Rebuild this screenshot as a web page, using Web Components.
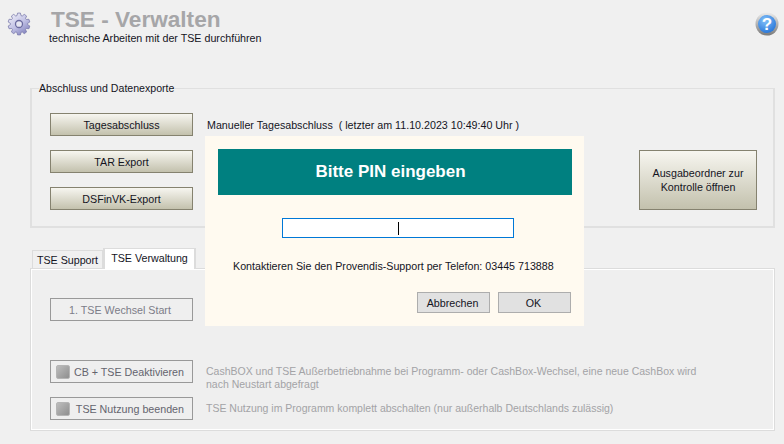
<!DOCTYPE html>
<html lang="de">
<head>
<meta charset="utf-8">
<title>TSE - Verwalten</title>
<style>
  html, body { margin: 0; height: 100%; background: #f0f0f0; }
  body { font: 10.7px "Liberation Sans", Arial, sans-serif; color: #14141e; overflow: hidden; }
</style>
</head>
<body>
<tse-window></tse-window>

<script>
// ten tooth gear outline, centre 12/12
function gearPath(){
  let d = '';
  const teeth = 10;
  for(let i = 0; i < teeth; i++){
    const a = i * Math.PI * 2 / teeth;
    const pts = [[8.6, -.24], [11, -.13], [11, .13], [8.6, .24]];
    pts.forEach((p, n) => {
      const x = 12 + p[0] * Math.sin(a + p[1]);
      const y = 12 - p[0] * Math.cos(a + p[1]);
      d += (i === 0 && n === 0 ? 'M' : 'L') + x.toFixed(2) + ' ' + y.toFixed(2);
    });
  }
  return d + 'Z';
}

class AppHeader extends HTMLElement {
  constructor(){
    super();
    this.attachShadow({mode: 'open'});
    this.shadowRoot.innerHTML = `
    <style>
      :host { display: flex; height: 81px; box-sizing: border-box; padding: 9px 5px 0 7px; }
      .gear { width: 24px; height: 24px; margin-top: 3px; flex: none; }
      .titles { margin-left: 18px; flex: 1; }
      h1 { margin: 0 0 0 2px; font: bold 22.6px/22px "Liberation Sans", sans-serif; color: #a6a6a8; }
      p { margin: 0; font-size: 10.7px; line-height: 14px; color: #14141e; }
      .help { width: 24px; height: 24px; margin-top: 3px; flex: none; }
      .help text { font: bold 17px "Liberation Sans", sans-serif; fill: #fff; text-anchor: middle; }
    </style>
    <svg class="gear" viewBox="0 0 24 24">
      <defs>
        <linearGradient id="g" x1="0.1" y1="0" x2="0.8" y2="1">
          <stop offset="0" stop-color="#f2f2fa"/>
          <stop offset="0.55" stop-color="#c0c0e4"/>
          <stop offset="1" stop-color="#8080bc"/>
        </linearGradient>
      </defs>
      <path fill="url(#g)" stroke="#7c7cac" stroke-width=".8" stroke-linejoin="round" d="${gearPath()}"/>
      <circle cx="12" cy="12" r="3.500" fill="#e6e6f2" stroke="#6c6ca0" stroke-width="1.300"/>
    </svg>
    <div class="titles">
      <h1>TSE - Verwalten</h1>
      <p>technische Arbeiten mit der TSE durchführen</p>
    </div>
    <svg class="help" viewBox="0 0 24 24">
      <defs>
        <radialGradient id="b" cx="0.4" cy="0.3" r="0.8">
          <stop offset="0" stop-color="#84c2fa"/>
          <stop offset="1" stop-color="#1f6fd6"/>
        </radialGradient>
        <linearGradient id="r" x1="0" y1="0" x2="0" y2="1">
          <stop offset="0" stop-color="#ececec"/>
          <stop offset="1" stop-color="#7a7a7a"/>
        </linearGradient>
      </defs>
      <circle cx="12" cy="12" r="11.500" fill="url(#r)"/>
      <circle cx="12" cy="12" r="9" fill="url(#b)"/>
      <text x="12" y="18">?</text>
    </svg>`;
  }
}

class WinButton extends HTMLElement {
  constructor(){
    super();
    this.attachShadow({mode: 'open'});
    this.shadowRoot.innerHTML = `
    <style>
      :host { display: flex; align-items: center; justify-content: center; box-sizing: border-box;
        height: 23px; border: 1px solid #85826f; text-align: center; line-height: 14px; color: #14141e;
        white-space: nowrap; background: linear-gradient(#f7f6f0, #c3c1ad); }
      :host([disabled]) { background: #efefef; border-color: #999; color: #7c7c88; padding-right: 3px; }
      :host([flat]) { background: #e1e1e1; border-color: #adadad; color: #14141e; padding-right: 2px; }
      :host([check]) { justify-content: space-between; padding: 0 8px 0 5px; color: #64646e; }
      .check { display: none; width: 14px; height: 14px; box-sizing: border-box; border-radius: 2px; background: linear-gradient(135deg, #bdbdbd, #8f8f8f); border: 1px solid #b5b5b5; flex: none; }
      :host([check]) .check { display: block; }
    </style>
    <span class="check"></span><span><slot></slot></span>`;
  }
}

class GroupBox extends HTMLElement {
  constructor(){
    super();
    this.attachShadow({mode: 'open'});
    this.shadowRoot.innerHTML = `
    <style>
      :host { display: block; }
      fieldset { margin: 0; padding: 18px 16px 0 18px; height: 147px; box-sizing: border-box; border: 2px solid #e0e0e0; border-width: 1px 2px 2px 2px; }
      legend { margin-left: -11px; padding: 0 1px 0 0; line-height: 14px; color: #14141e; font-size: 10.6px; }
      .body { display: grid; grid-template-columns: 143px 1fr 118px; grid-auto-rows: 23px; row-gap: 14px; align-items: center; }
    </style>
    <fieldset>
      <legend><slot name="legend"></slot></legend>
      <div class="body"><slot></slot></div>
    </fieldset>`;
  }
}

class TabStrip extends HTMLElement {
  constructor(){
    super();
    this.attachShadow({mode: 'open'});
    this.shadowRoot.innerHTML = `
    <style>
      :host { display: flex; align-items: flex-end; height: 21px; padding-left: 2px; margin-bottom: -1px; position: relative; z-index: 1; }
      .tab { box-sizing: border-box; height: 18px; padding-top: 2px; border: 1px solid #dcdcdc; border-bottom: 0; margin-bottom: 1px; background: #f0f0f0; text-align: center; line-height: 14px; color: #14141e; }
      .one { width: 71px; }
      .two { width: 93px; height: 21px; margin-bottom: 0; background: #fff; border-width: 1px 2px 0 2px; padding-top: 2px; }
    </style>
    <div class="tab one">TSE Support</div>
    <div class="tab two">TSE Verwaltung</div>`;
  }
}

class TabPanel extends HTMLElement {
  constructor(){
    super();
    this.attachShadow({mode: 'open'});
    this.shadowRoot.innerHTML = `
    <style>
      :host { display: block; box-sizing: border-box; height: 163px; padding: 29px 19px 0 19px; background: #efefef; border: 1px solid #dcdcdc; box-shadow: inset 1px 1px 0 #fff, inset -1px -1px 0 #fff; }
      .rows { display: grid; grid-template-columns: 143px 1fr; column-gap: 13px; grid-template-rows: 48px 23px 23px; row-gap: 14px; align-items: start; }
    </style>
    <div class="rows"><slot></slot></div>`;
  }
}

class PinDialog extends HTMLElement {
  constructor(){
    super();
    this.attachShadow({mode: 'open'});
    this.shadowRoot.innerHTML = `
    <style>
      :host { position: absolute; left: 205px; top: 136px; width: 379px; height: 190px; box-sizing: border-box; padding: 13px 12px 0 13px; background: #fffaf0; display: flex; flex-direction: column; }
      .head { height: 46px; padding-right: 9px; background: #008080; color: #fff; font: bold 17px/46px "Liberation Sans", sans-serif; text-align: center; flex: none; }
      .input { box-sizing: border-box; width: 232px; height: 20px; margin: 23px 0 0 64px; background: #fff; border: 1px solid #0078d7; display: flex; align-items: center; justify-content: center; }
      .caret { width: 1px; height: 13px; background: #000; }
      p { margin: 21px 0 0 15px; line-height: 14px; color: #14141e; white-space: nowrap; }
      .actions { display: flex; justify-content: flex-end; gap: 8px; margin: 19px 1px 0 0; }
      win-button { width: 73px; height: 21px; }
    </style>
    <div class="head">Bitte PIN eingeben</div>
    <div class="input"><div class="caret"></div></div>
    <p>Kontaktieren Sie den Provendis-Support per Telefon: 03445 713888</p>
    <div class="actions">
      <win-button flat>Abbrechen</win-button>
      <win-button flat>OK</win-button>
    </div>`;
  }
}

class TseWindow extends HTMLElement {
  constructor(){
    super();
    this.attachShadow({mode: 'open'});
    this.shadowRoot.innerHTML = `
    <style>
      :host { display: block; position: relative; width: 784px; height: 444px; }
      .content { padding: 0 9px 0 30px; }
      tab-strip { margin-top: 20px; }
      .note { color: #14141e; line-height: 14px; padding-left: 14px; }
      .desc { color: #a3a3a6; font-size: 10.5px; line-height: 13px; padding-top: 5px; }
      .first { grid-column: 1; }
      .right { grid-column: 3; grid-row: 2 / span 2; height: 60px; }
    </style>
    <app-header></app-header>
    <div class="content">
      <group-box>
        <span slot="legend">Abschluss und Datenexporte</span>
        <win-button>Tagesabschluss</win-button>
        <span class="note">Manueller Tagesabschluss&nbsp; ( letzter am 11.10.2023 10:49:40 Uhr )</span>
        <win-button class="first">TAR Export</win-button>
        <win-button class="right">Ausgabeordner zur<br>Kontrolle öffnen</win-button>
        <win-button class="first">DSFinVK-Export</win-button>
      </group-box>
      <tab-strip></tab-strip>
      <tab-panel>
        <win-button disabled>1. TSE Wechsel Start</win-button>
        <span></span>
        <win-button disabled check>CB + TSE Deaktivieren</win-button>
        <span class="desc">CashBOX und TSE Außerbetriebnahme bei Programm- oder CashBox-Wechsel, eine neue CashBox wird<br>nach Neustart abgefragt</span>
        <win-button disabled check>TSE Nutzung beenden</win-button>
        <span class="desc">TSE Nutzung im Programm komplett abschalten (nur außerhalb Deutschlands zulässig)</span>
      </tab-panel>
    </div>
    <pin-dialog></pin-dialog>`;
  }
}

customElements.define('app-header', AppHeader);
customElements.define('win-button', WinButton);
customElements.define('group-box', GroupBox);
customElements.define('tab-strip', TabStrip);
customElements.define('tab-panel', TabPanel);
customElements.define('pin-dialog', PinDialog);
customElements.define('tse-window', TseWindow);
</script>
</body>
</html>
